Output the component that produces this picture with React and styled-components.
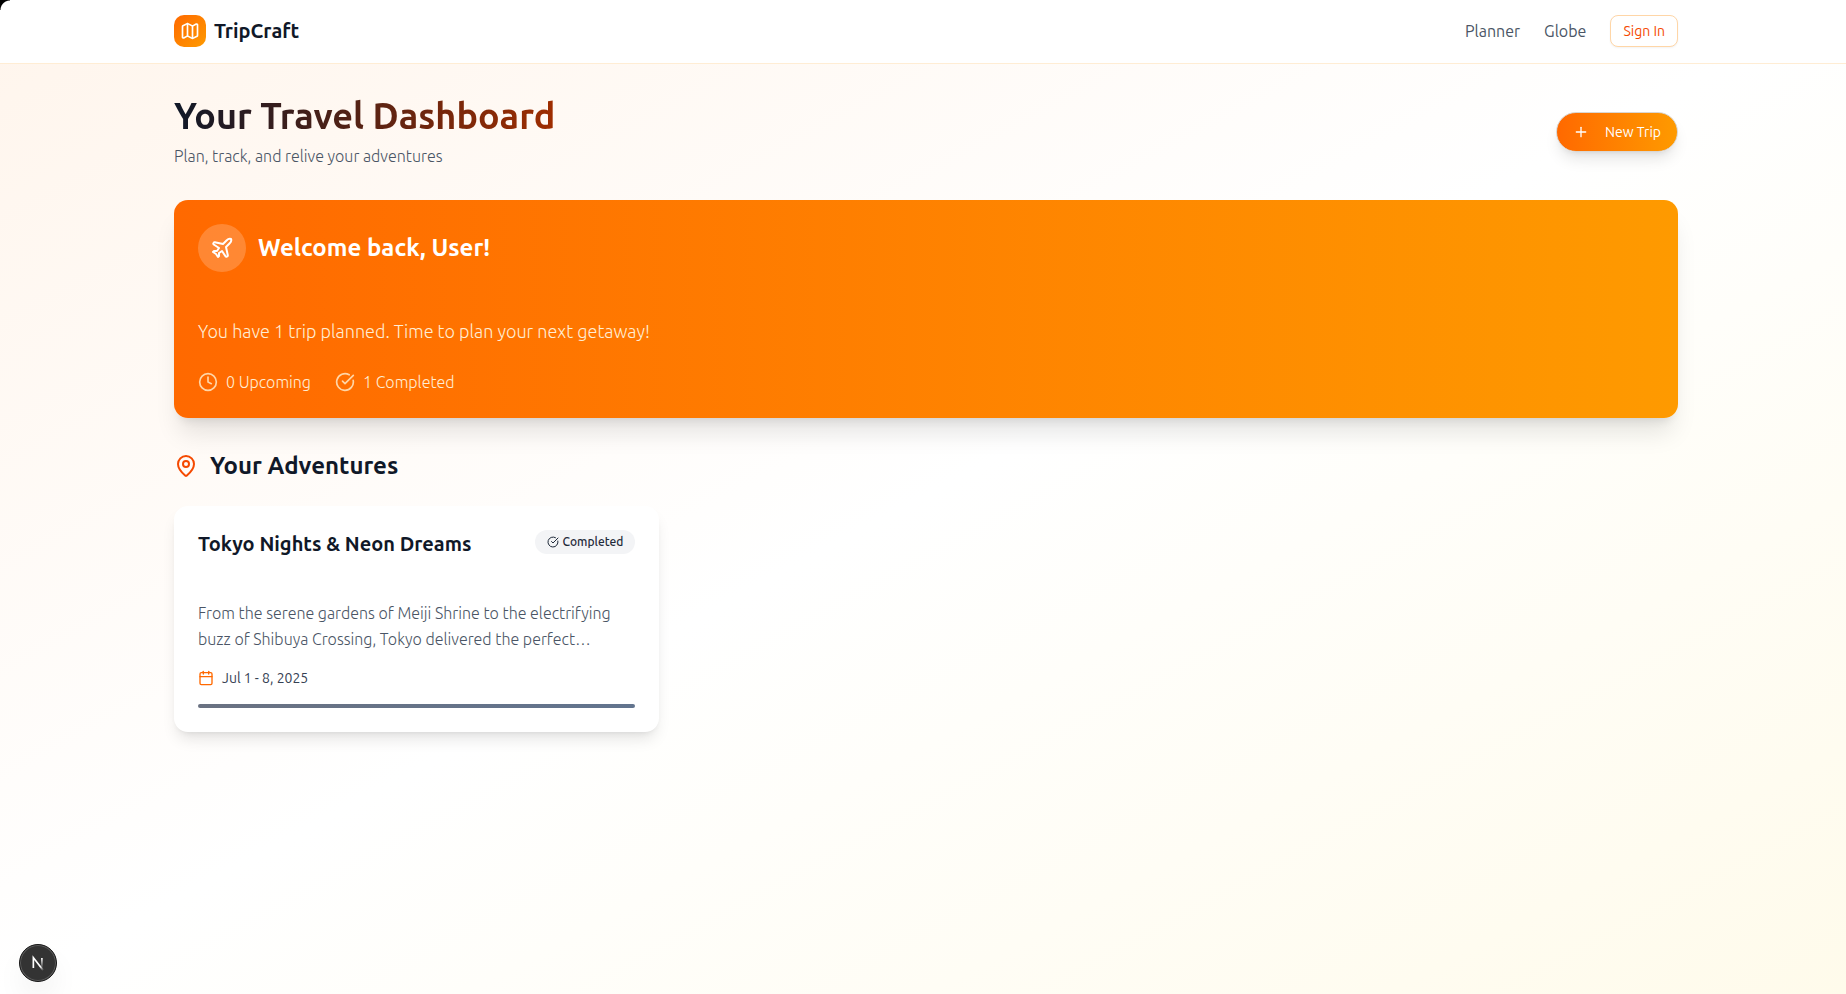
import React from "react";
import styled, { createGlobalStyle } from "styled-components";
import { Map, Plus, Plane, Clock, CircleCheckBig, MapPin, Calendar } from "lucide-react";

const GlobalStyle = createGlobalStyle`
  *, *::before, *::after { box-sizing: border-box; }
  body {
    margin: 0;
    font-family: Ubuntu, "Noto Sans", "Open Sans", sans-serif;
    font-size: 16px;
    line-height: 24px;
    color: #101828;
  }
  h1, h2, h3, p { margin: 0; }
  a { color: inherit; text-decoration: none; }
  button { font-family: inherit; cursor: pointer; }
  svg { flex-shrink: 0; }
`;

const Page = styled.div`
  min-height: 100vh;
  background: linear-gradient(to bottom right, #fff5ec 0%, #ffffff 50%, #fffbeb 100%);
`;

const Shell = styled.div`
  padding: 0 16px 0 22px;
`;

const Container = styled.div`
  max-width: 1504px;
  margin: 0 auto;
`;

const Header = styled.header`
  background: #ffffff;
  border-bottom: 1px solid #ffedd4;
`;

const HeaderRow = styled(Container)`
  display: flex;
  align-items: center;
  justify-content: space-between;
  padding: 15px 0 16px;
`;

const Brand = styled.a`
  display: flex;
  align-items: center;
  gap: 8px;
  font-size: 20px;
  font-weight: 600;
`;

const BrandMark = styled.span`
  display: grid;
  place-items: center;
  width: 32px;
  height: 32px;
  border-radius: 10px;
  color: #ffffff;
  background: linear-gradient(to bottom right, #ff6900, #fe9a00);
`;

const Nav = styled.nav`
  display: flex;
  align-items: center;
  gap: 24px;
  color: #4a5565;
`;

const SignIn = styled.button`
  height: 32px;
  padding: 0 12px;
  border: 1px solid #ffd6a7;
  border-radius: 8px;
  background: #ffffff;
  color: #f54900;
  font-size: 14px;
  box-shadow: 0 1px 2px rgba(0, 0, 0, 0.05);
`;

const Main = styled.main`
  display: flex;
  flex-direction: column;
  gap: 32px;
  padding: 32px 0;
`;

const Intro = styled.div`
  display: flex;
  align-items: center;
  justify-content: space-between;
`;

const PageTitle = styled.h1`
  width: fit-content;
  margin-bottom: 8px;
  font-size: 36px;
  line-height: 40px;
  font-weight: 600;
  color: transparent;
  background: linear-gradient(to right, #101828, #9f2d00);
  background-clip: text;
`;

const Subtitle = styled.p`
  color: #4a5565;
  font-weight: 300;
`;

const NewTrip = styled.button`
  display: flex;
  align-items: center;
  gap: 16px;
  height: 40px;
  padding: 0 16px;
  border: 1px solid #d9d6d2;
  border-radius: 20px;
  color: #ffffff;
  font-size: 14px;
  background: linear-gradient(to right, #ff6900, #fe9a00);
  box-shadow: 0 10px 15px -3px rgba(0, 0, 0, 0.1), 0 4px 6px -4px rgba(0, 0, 0, 0.1);
`;

const Welcome = styled.section`
  padding: 24px;
  border-radius: 14px;
  color: #ffedd4;
  background: linear-gradient(to right, #ff6900, #fe9a00);
  box-shadow: 0 20px 25px -5px rgba(0, 0, 0, 0.1), 0 8px 10px -6px rgba(0, 0, 0, 0.1);
`;

const WelcomeHead = styled.div`
  display: flex;
  align-items: center;
  gap: 12px;
  color: #ffffff;
`;

const PlaneBadge = styled.span`
  display: grid;
  place-items: center;
  width: 48px;
  height: 48px;
  border-radius: 50%;
  background: rgba(255, 255, 255, 0.2);
`;

const SectionTitle = styled.h2`
  font-size: 24px;
  line-height: 32px;
  font-weight: 600;
`;

const WelcomeText = styled.p`
  margin: 45px 0 25px;
  font-size: 18px;
  line-height: 28px;
  font-weight: 300;
`;

const Stats = styled.div`
  display: flex;
  gap: 24px;
  font-weight: 300;

  svg { color: #ffd6a7; }
`;

const Stat = styled.span`
  display: flex;
  align-items: center;
  gap: 8px;
`;

const Adventures = styled.section`
  display: flex;
  flex-direction: column;
  gap: 24px;
`;

const AdventuresHead = styled.div`
  display: flex;
  align-items: center;
  gap: 12px;

  svg { color: #f54900; }
`;

const TripGrid = styled.div`
  display: grid;
  grid-template-columns: repeat(3, 1fr);
  gap: 24px;
`;

const TripCard = styled.article`
  padding: 24px;
  border-radius: 14px;
  background: #ffffff;
  box-shadow: 0 10px 15px -3px rgba(0, 0, 0, 0.1), 0 4px 6px -4px rgba(0, 0, 0, 0.1);
`;

const TripHead = styled.div`
  display: flex;
  align-items: flex-start;
  justify-content: space-between;
  margin-bottom: 42px;
`;

const TripTitle = styled.h3`
  font-size: 20px;
  line-height: 28px;
  font-weight: 600;
`;

const Badge = styled.span`
  display: flex;
  align-items: center;
  gap: 4px;
  height: 24px;
  padding: 0 12px;
  border-radius: 12px;
  background: #f3f4f6;
  color: #1e2939;
  font-size: 12px;
  font-weight: 500;
`;

const TripText = styled.p`
  margin-bottom: 16px;
  line-height: 26px;
  font-weight: 300;
  color: #4a5565;
`;

const TripDates = styled.div`
  display: flex;
  align-items: center;
  gap: 8px;
  margin-bottom: 16px;
  font-size: 14px;
  line-height: 20px;
  color: #364153;

  svg { color: #ff6900; }
`;

const Progress = styled.div`
  height: 4px;
  border-radius: 2px;
  background: linear-gradient(to right, #6a7282, #62748e);
`;

const DevButton = styled.button`
  position: fixed;
  left: 19px;
  bottom: 12px;
  width: 38px;
  height: 38px;
  padding: 0;
  border: 1px solid #171717;
  border-radius: 50%;
  background: #333333;
  box-shadow: inset 0 0 0 1px #5c5c5c, 0 16px 32px -8px rgba(0, 0, 0, 0.14);

  svg { display: block; }
`;

const WindowCorner = styled.div`
  position: fixed;
  top: 0;
  left: 0;
  width: 10px;
  height: 10px;
  background: radial-gradient(circle at 100% 100%, transparent 9px, #000000 10px);
`;

const NextLogo = () => (
  <svg width="36" height="36" viewBox="0 0 40 40" fill="none">
    <defs>
      <linearGradient id="diagonal" x1="9.9" y1="11" x2="13.5" y2="15.3" gradientUnits="userSpaceOnUse">
        <stop stopColor="#fff" />
        <stop offset="0.6" stopColor="#fff" stopOpacity="0.4" />
        <stop offset="1" stopColor="#fff" stopOpacity="0" />
      </linearGradient>
      <linearGradient id="upright" x1="11.8" y1="1.5" x2="11.8" y2="13" gradientUnits="userSpaceOnUse">
        <stop stopColor="#fff" />
        <stop offset="1" stopColor="#fff" stopOpacity="0" />
      </linearGradient>
    </defs>
    <g transform="translate(12.5 13)" strokeWidth="1.86">
      <path d="M13.3 15.2 L2.34 1 V12.6" stroke="url(#diagonal)" />
      <path d="M11.825 1.5 V13.1" stroke="url(#upright)" />
    </g>
  </svg>
);

const trips = [
  {
    title: "Tokyo Nights & Neon Dreams",
    status: "Completed",
    text: "From the serene gardens of Meiji Shrine to the electrifying buzz of Shibuya Crossing, Tokyo delivered the perfect…",
    dates: "Jul 1 - 8, 2025",
  },
];

export default function App() {
  return (
    <Page>
      <GlobalStyle />
      <Header>
        <Shell>
          <HeaderRow>
            <Brand href="#">
              <BrandMark><Map size={20} /></BrandMark>
              TripCraft
            </Brand>
            <Nav>
              <a href="#planner">Planner</a>
              <a href="#globe">Globe</a>
              <SignIn type="button">Sign In</SignIn>
            </Nav>
          </HeaderRow>
        </Shell>
      </Header>
      <Shell>
        <Container>
          <Main>
            <Intro>
              <div>
                <PageTitle>Your Travel Dashboard</PageTitle>
                <Subtitle>Plan, track, and relive your adventures</Subtitle>
              </div>
              <NewTrip type="button">
                <Plus size={16} />
                New Trip
              </NewTrip>
            </Intro>
            <Welcome>
              <WelcomeHead>
                <PlaneBadge><Plane size={24} /></PlaneBadge>
                <SectionTitle>Welcome back, User!</SectionTitle>
              </WelcomeHead>
              <WelcomeText>You have 1 trip planned. Time to plan your next getaway!</WelcomeText>
              <Stats>
                <Stat><Clock size={20} />0 Upcoming</Stat>
                <Stat><CircleCheckBig size={20} />1 Completed</Stat>
              </Stats>
            </Welcome>
            <Adventures>
              <AdventuresHead>
                <MapPin size={24} />
                <SectionTitle>Your Adventures</SectionTitle>
              </AdventuresHead>
              <TripGrid>
                {trips.map((trip) => (
                  <TripCard key={trip.title}>
                    <TripHead>
                      <TripTitle>{trip.title}</TripTitle>
                      <Badge><CircleCheckBig size={12} />{trip.status}</Badge>
                    </TripHead>
                    <TripText>{trip.text}</TripText>
                    <TripDates><Calendar size={16} />{trip.dates}</TripDates>
                    <Progress />
                  </TripCard>
                ))}
              </TripGrid>
            </Adventures>
          </Main>
        </Container>
      </Shell>
      <DevButton type="button" aria-label="Open developer tools"><NextLogo /></DevButton>
      <WindowCorner />
    </Page>
  );
}
